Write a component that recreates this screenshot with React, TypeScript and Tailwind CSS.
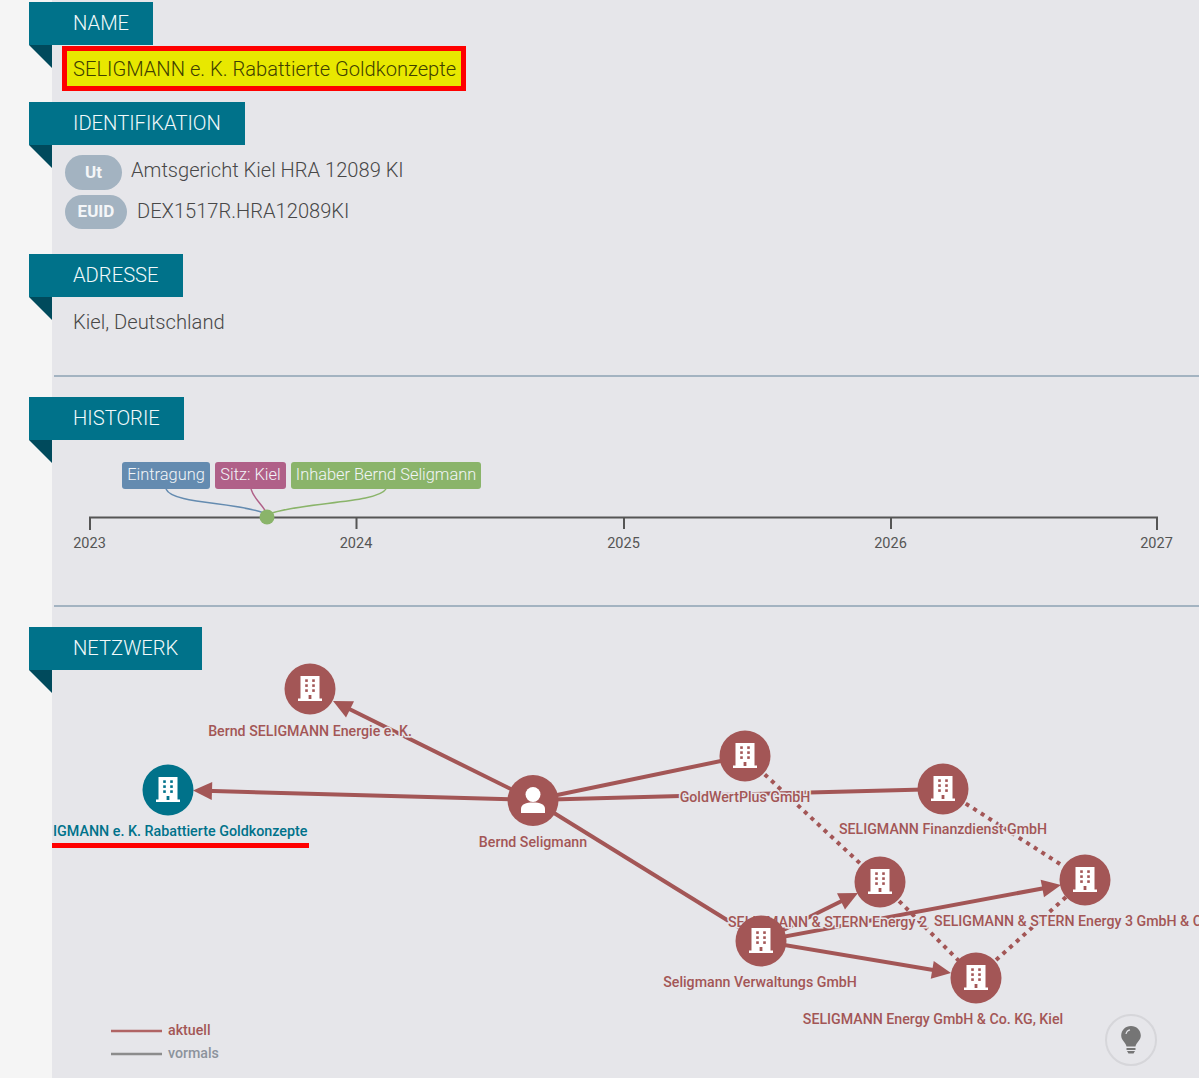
const FONT = 'font-["Roboto","Liberation_Sans",sans-serif]';

const NODE_RED = '#a35656';
const TEAL = '#00728a';

function Ribbon({ label }: { label: string }) {
  return (
    <div className="relative -ml-[23px] flex h-[43px] w-fit items-center bg-[#00728a] pl-[44px] pr-[24px] text-[20.2px] font-light leading-none text-[#f2fafb]">
      {label}
      <span className="absolute left-0 top-full h-0 w-0 border-l-[23px] border-t-[23px] border-l-transparent border-t-[#004a5c]" />
    </div>
  );
}

function Pill({ children, className }: { children: string; className: string }) {
  return (
    <span className={`flex items-center justify-center rounded-full bg-[#a3b3c1] text-[17px] font-bold text-[#f4f6f8] ${className}`}>
      {children}
    </span>
  );
}

function Divider() {
  return <div className="ml-[2px] h-[2px] bg-[#a3b3c1]" />;
}

function Timeline() {
  const years = [
    { label: '2023', x: 90 },
    { label: '2024', x: 356.5 },
    { label: '2025', x: 624 },
    { label: '2026', x: 891 },
    { label: '2027', x: 1157 },
  ];
  return (
    <>
      <div className="ml-[70px] mt-[22px] flex h-[27px] gap-[5px] text-[16.4px] font-light leading-[25px] text-[#f2f5f8]">
        <span className="w-[88px] rounded-[3px] bg-[#648bb0] text-center">Eintragung</span>
        <span className="w-[71px] rounded-[3px] bg-[#b06088] text-center">Sitz: Kiel</span>
        <span className="w-[190px] rounded-[3px] bg-[#8ab46a] text-center">Inhaber Bernd Seligmann</span>
      </div>
      <svg width="1147" height="70" viewBox="52 489 1147 70" className="block">
        <path d="M166 489 C172 504 235 502 264 513" fill="none" stroke="#648bb0" strokeWidth="1.5" />
        <path d="M251 489 C254 499 261 503 266 512" fill="none" stroke="#b06088" strokeWidth="1.5" />
        <path d="M386 489 C378 503 305 502 272 513" fill="none" stroke="#8ab46a" strokeWidth="1.5" />
        <path d="M90 530 V517.5 H1157 V530" fill="none" stroke="#555555" strokeWidth="2" />
        {years.slice(1, 4).map((y) => (
          <line key={y.label} x1={y.x} x2={y.x} y1="517" y2="529" stroke="#555555" strokeWidth="2" />
        ))}
        <circle cx="267" cy="517" r="7.5" fill="#8ab46a" />
        {years.map((y) => (
          <text key={y.label} x={y.x - 0.5} y="547.5" textAnchor="middle" fontSize="14.5" fill="#555555">
            {y.label}
          </text>
        ))}
      </svg>
    </>
  );
}

function BuildingIcon({ x, y, fill }: { x: number; y: number; fill: string }) {
  return (
    <g transform={`translate(${x} ${y})`}>
      <rect x="-9.5" y="-13" width="19" height="24" fill="#ffffff" />
      <rect x="-12" y="9.5" width="24" height="2.5" fill="#ffffff" />
      {[-8.5, -3.5, 1.5].map((wy) => (
        <g key={wy} fill={fill}>
          <rect x="-4.8" y={wy - 1.2} width="2.6" height="2.6" />
          <rect x="2.2" y={wy - 1.2} width="2.6" height="2.6" />
        </g>
      ))}
      <rect x="-1.4" y="6" width="2.8" height="4" fill={fill} />
    </g>
  );
}

function Arrow({ from, to }: { from: number[]; to: number[] }) {
  const dx = to[0] - from[0];
  const dy = to[1] - from[1];
  const len = Math.hypot(dx, dy);
  const angle = (Math.atan2(dy, dx) * 180) / Math.PI;
  // stop the shaft inside the head so its end does not poke past the tip
  const endX = to[0] - (dx / len) * 12;
  const endY = to[1] - (dy / len) * 12;
  return (
    <g>
      <line x1={from[0]} y1={from[1]} x2={endX} y2={endY} stroke={NODE_RED} strokeWidth="4" />
      <polygon points="0,0 -19,-9 -19,9" fill={NODE_RED} transform={`translate(${to[0]} ${to[1]}) rotate(${angle})`} />
    </g>
  );
}

const buildings = [
  { x: 310, y: 689 },
  { x: 745, y: 756 },
  { x: 943, y: 789 },
  { x: 880, y: 882 },
  { x: 1085, y: 880 },
  { x: 761, y: 941 },
  { x: 976, y: 978 },
];

const labels = [
  { text: 'Bernd SELIGMANN Energie e. K.', x: 310, y: 736 },
  { text: 'GoldWertPlus GmbH', x: 745, y: 802 },
  { text: 'Bernd Seligmann', x: 533, y: 847 },
  { text: 'SELIGMANN Finanzdienst GmbH', x: 943, y: 834 },
  { text: 'SELIGMANN & STERN Energy 2', x: 827.5, y: 927 },
  { text: 'SELIGMANN & STERN Energy 3 GmbH & Co. KG', x: 1085, y: 926 },
  { text: 'Seligmann Verwaltungs GmbH', x: 760, y: 987 },
  { text: 'SELIGMANN Energy GmbH & Co. KG, Kiel', x: 933, y: 1024 },
];

function Network() {
  return (
    <div className="relative -mt-[10px] flex-1 overflow-hidden">
      <svg width="1147" height="418" viewBox="52 660 1147 418" className="block font-medium">
        <defs>
          <clipPath id="selected-label">
            <rect x="53.5" y="820" width="300" height="24" />
          </clipPath>
        </defs>
        <g stroke={NODE_RED} strokeWidth="4">
          <line x1="533" y1="800" x2="745" y2="756" />
          <line x1="533" y1="800" x2="943" y2="789" />
          <line x1="533" y1="800" x2="761" y2="941" />
        </g>
        <g stroke={NODE_RED} strokeWidth="4" strokeDasharray="4 5" fill="none">
          <line x1="745" y1="756" x2="880" y2="882" />
          <line x1="943" y1="789" x2="1085" y2="880" />
          <line x1="880" y1="882" x2="976" y2="978" />
          <line x1="976" y1="978" x2="1085" y2="880" />
        </g>
        <Arrow from={[533, 800]} to={[333, 701]} />
        <Arrow from={[533, 800]} to={[193, 790.5]} />
        <Arrow from={[761, 941]} to={[858, 893]} />
        <Arrow from={[761, 941]} to={[1061, 885]} />
        <Arrow from={[761, 941]} to={[951, 973]} />

        {labels.map((l) => (
          <text
            key={l.text}
            x={l.x}
            y={l.y}
            textAnchor="middle"
            fontSize="14.2"
            fill={NODE_RED}
            stroke="#e6e6ea"
            strokeWidth="3"
            className="[paint-order:stroke]"
          >
            {l.text}
          </text>
        ))}
        <text x="168" y="836" textAnchor="middle" fontSize="14.3" fill={TEAL} clipPath="url(#selected-label)">
          SELIGMANN e. K. Rabattierte Goldkonzepte
        </text>
        <rect x="52" y="843" width="257" height="5" fill="#ff0000" />

        {buildings.map((b) => (
          <g key={`${b.x}-${b.y}`}>
            <circle cx={b.x} cy={b.y} r="25.5" fill={NODE_RED} />
            <BuildingIcon x={b.x} y={b.y} fill={NODE_RED} />
          </g>
        ))}
        <circle cx="168" cy="790" r="25.5" fill={TEAL} />
        <BuildingIcon x={168} y={790} fill={TEAL} />
        <circle cx="533" cy="800.5" r="25.5" fill={NODE_RED} />
        <circle cx="533" cy="794.5" r="7.5" fill="#ffffff" />
        <path d="M521 813 V809 C521 804 526 802.5 533 802.5 C540 802.5 545 804 545 809 V813 Z" fill="#ffffff" />

        <line x1="111" y1="1031" x2="162" y2="1031" stroke="#b06464" strokeWidth="2.5" />
        <line x1="111" y1="1054" x2="162" y2="1054" stroke="#8c8c8c" strokeWidth="2.5" />
        <text x="168" y="1035" fontSize="14.2" fill={NODE_RED}>aktuell</text>
        <text x="168" y="1058" fontSize="14.2" fill="#8c939c">vormals</text>
      </svg>

      <button className="absolute left-[1053px] top-[354px] flex h-[52px] w-[52px] items-center justify-center rounded-full border-2 border-[#d6d6da]">
        <svg width="24" height="30" viewBox="0 0 24 30">
          <path d="M12 1 C6.5 1 2.2 5.2 2.2 10.6 C2.2 15.5 6.8 17.5 7.5 21.5 H16.5 C17.2 17.5 21.8 15.5 21.8 10.6 C21.8 5.2 17.5 1 12 1 Z" fill="#757575" />
          <rect x="7.5" y="23" width="9" height="2" fill="#757575" />
          <path d="M8 26 H16 L14.5 28.5 H9.5 Z" fill="#757575" />
          <path d="M7 9 C7.4 6.8 9 5.2 11 4.8" fill="none" stroke="#e6e6ea" strokeWidth="1.2" />
        </svg>
      </button>
    </div>
  );
}

export default function App() {
  return (
    <div className={`flex h-[1078px] w-[1199px] overflow-hidden bg-[#f5f5f5] text-[#484848] ${FONT}`}>
      <div className="w-[52px] shrink-0" />
      <main className="flex min-w-0 flex-1 flex-col bg-[#e6e6ea] pt-[2px]">
        <Ribbon label="NAME" />
        <div className="ml-[10px] mt-[1px] flex h-[45px] w-[404px] items-center whitespace-nowrap border-[5px] border-[#ff0000] bg-[#e8e800] pl-[6px] pt-[2px] text-[20.15px] font-light text-[#404000]">
          SELIGMANN e. K. Rabattierte Goldkonzepte
        </div>

        <div className="mt-[11px]">
          <Ribbon label="IDENTIFIKATION" />
        </div>
        <div className="ml-[13px] mt-[10px] flex flex-col gap-[5px] text-[20.1px] font-light">
          <div className="flex h-[35px] items-center">
            <Pill className="h-[35px] w-[57px]">Ut</Pill>
            <span className="ml-[9px] -translate-y-[2px]">Amtsgericht Kiel HRA 12089 KI</span>
          </div>
          <div className="flex h-[34px] items-center">
            <Pill className="h-[34px] w-[62px]">EUID</Pill>
            <span className="ml-[10px] -translate-y-[1px]">DEX1517R.HRA12089KI</span>
          </div>
        </div>

        <div className="mt-[25px]">
          <Ribbon label="ADRESSE" />
        </div>
        <div className="ml-[21px] mt-[11px] text-[20.2px] font-light leading-[28px]">Kiel, Deutschland</div>

        <div className="mt-[39px]">
          <Divider />
        </div>
        <div className="mt-[20px]">
          <Ribbon label="HISTORIE" />
        </div>
        <Timeline />

        <div className="mt-[46px]">
          <Divider />
        </div>
        <div className="mt-[20px]">
          <Ribbon label="NETZWERK" />
        </div>
        <Network />
      </main>
    </div>
  );
}
